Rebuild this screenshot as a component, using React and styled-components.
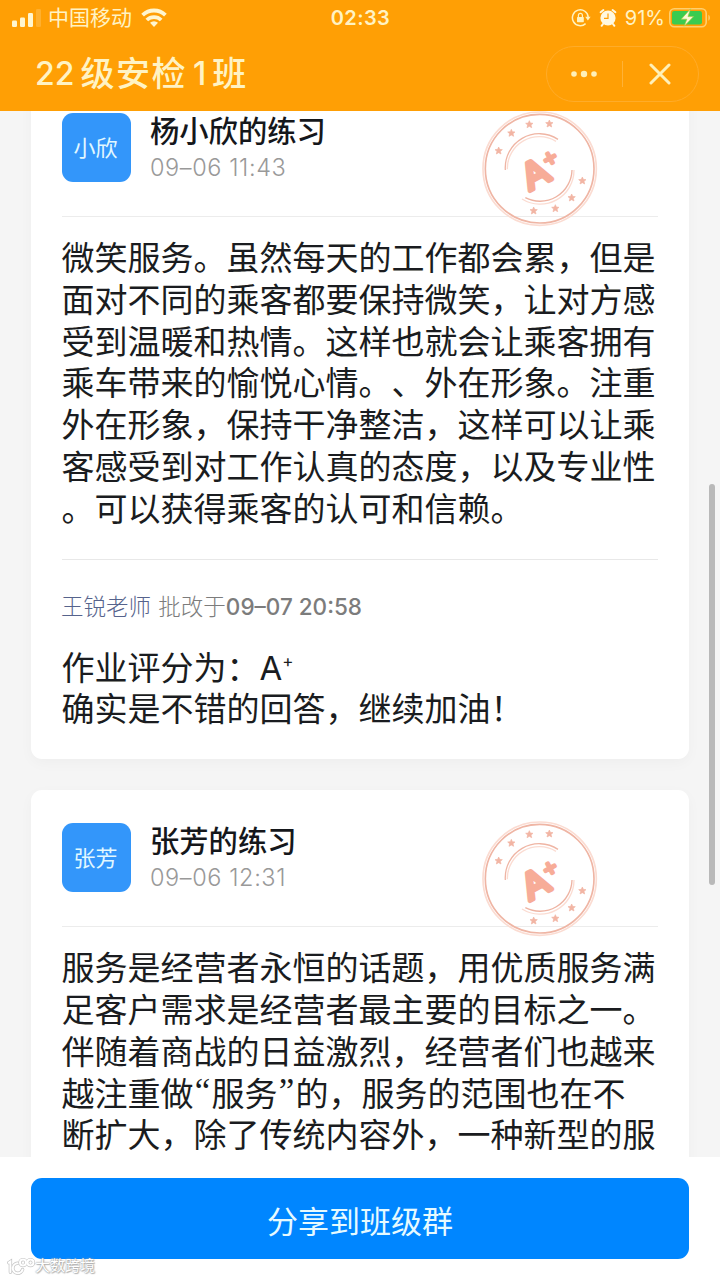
import React from 'react';
import styled, { createGlobalStyle } from 'styled-components';

const records = [
    {
        id: 1,
        avatar: '小欣',
        title: '杨小欣的练习',
        time: '09–06 11:43',
        lines: [
            '微笑服务。虽然每天的工作都会累，但是',
            '面对不同的乘客都要保持微笑，让对方感',
            '受到温暖和热情。这样也就会让乘客拥有',
            '乘车带来的愉悦心情。、外在形象。注重',
            '外在形象，保持干净整洁，这样可以让乘',
            '客感受到对工作认真的态度，以及专业性',
            '。可以获得乘客的认可和信赖。',
        ],
        review: {
            teacher: '王锐老师',
            time: '09–07 20:58',
            comment: '确实是不错的回答，继续加油！',
        },
    },
    {
        id: 2,
        avatar: '张芳',
        title: '张芳的练习',
        time: '09–06 12:31',
        lines: [
            '服务是经营者永恒的话题，用优质服务满',
            '足客户需求是经营者最主要的目标之一。',
            '伴随着商战的日益激烈，经营者们也越来',
            '越注重做“服务”的，服务的范围也在不',
            '断扩大，除了传统内容外，一种新型的服',
        ],
    },
];

const stars = [
    [86, 137], [124, 84], [178, 58], [238, 56],
    [337, 227], [305, 278], [256, 310], [191, 317],
];

// curly quotes get their own narrow cell between the full-width characters
const withQuotes = line => line.split(/([“”])/).map((part, i) => (
    i % 2 ? <Quote key={i}>{part}</Quote> : part
));

function StatusBar()
{
    return (
        <Status>
            <StatusSide>
                <svg width="30" height="20" viewBox="0 0 30 20" fill="#fff6d0">
                    <rect x="0" y="12.5" width="5" height="6.5" rx="1.2"/>
                    <rect x="8" y="9.5" width="5" height="9.5" rx="1.2"/>
                    <rect x="16" y="5" width="5" height="14" rx="1.2"/>
                    <rect x="24" y="1" width="5" height="18" rx="1.2" opacity="0.2"/>
                </svg>
                <Carrier>中国移动</Carrier>
                <svg width="26" height="20" viewBox="0 0 26 20" fill="none" stroke="#fff6d0" strokeWidth="3.8">
                    <path d="M1.6 7.2a16.2 16.2 0 0 1 22.8 0"/>
                    <path d="M5.8 12a10.4 10.4 0 0 1 14.4 0"/>
                    <path d="M13 19l-4-4.2a5.8 5.8 0 0 1 8 0z" fill="#fff6d0" stroke="none"/>
                </svg>
            </StatusSide>
            <Clock>02:33</Clock>
            <StatusSide $right>
                <svg width="20" height="20" viewBox="0 0 20 20" fill="none" stroke="#fff3c0" strokeWidth="1.5">
                    <path d="M17.2 9.2A7.9 7.9 0 1 0 14.6 15.6"/>
                    <path d="M14.2 8.8h5.4l-2.7 3.8z" fill="#fff3c0" stroke="none"/>
                    <rect x="6" y="9" width="6.8" height="5.2" rx="0.6" fill="#fff3c0" stroke="none"/>
                    <path d="M7.4 9V7.4a2 2 0 0 1 4 0V9" strokeWidth="1.2"/>
                </svg>
                <AlarmIcon width="18" height="20" viewBox="0 0 18 20" fill="#fff8e0">
                    <circle cx="9" cy="10" r="7.6"/>
                    <path d="M1.6 4.2L4.4 2M16.4 4.2L13.6 2M4 16l-1.4 1.8M14 16l1.4 1.8" stroke="#fff8e0" strokeWidth="2" strokeLinecap="round"/>
                    <path d="M9 5.4V10.4H5" fill="none" stroke="#ff9f05" strokeWidth="1.2"/>
                </AlarmIcon>
                <Percent>91%</Percent>
                <svg width="44" height="20" viewBox="0 0 44 20">
                    <rect x="0.8" y="0.8" width="36.4" height="18" rx="4.5" fill="none" stroke="#ffcf6e" strokeWidth="1.6"/>
                    <rect x="3" y="3" width="30" height="13.6" rx="2.4" fill="#3bcb50"/>
                    <path d="M39.4 6.8c2 .8 2 5.2 0 6z" fill="#ffcf6e"/>
                    <path d="M21.6 0.8l-9.4 10.4h5.6l-2.6 7 9.4-9.6h-5.6z" fill="#fff8d8" stroke="#9fce3c" strokeWidth="0.7"/>
                </svg>
            </StatusSide>
        </Status>
    );
}

function GradeStamp()
{
    return (
        <Stamp width="140" height="125" viewBox="0 0 420 375">
            <g fill="none">
                <circle cx="209" cy="191" r="170" stroke="#fbdcd2" strokeWidth="5"/>
                <circle cx="209" cy="191" r="163" stroke="#efb5a4" strokeWidth="5"/>
                <path d="M106 195A102 102 0 0 1 264 103" stroke="#efb5a4" strokeWidth="4"/>
                <path d="M112 193A96 96 0 0 1 258 109" stroke="#fbdcd2" strokeWidth="4"/>
                <path d="M312 195A102 102 0 0 1 156 282" stroke="#fbdcd2" strokeWidth="4"/>
                <path d="M306 195A96 96 0 0 1 166 278" stroke="#eeb3a2" strokeWidth="4"/>
            </g>
            {stars.map(([x, y]) => (
                <path
                    key={x}
                    transform={`translate(${x} ${y})`}
                    d="M0-11l3 7 8 1-6 5 2 8-7-4-7 4 2-8-6-5 8-1z"
                    fill="#f2b5a4"
                    stroke="#f2b5a4"
                    strokeWidth="2"
                    strokeLinejoin="round"
                />
            ))}
            <StampText transform="translate(213 240) rotate(-28)" $size={112} $stroke={14}>A</StampText>
            <StampText transform="translate(251 180) rotate(-28)" $size={68} $stroke={10}>+</StampText>
        </Stamp>
    );
}

function Record({ record })
{
    const { avatar, title, time, lines, review } = record;

    return (
        <Card>
            <CardHead>
                <Avatar>{avatar}</Avatar>
                <div>
                    <Name>{title}</Name>
                    <Time>{time}</Time>
                </div>
            </CardHead>
            <Body>
                {lines.map(line => <Line key={line}>{withQuotes(line)}</Line>)}
            </Body>
            {review &&
                <Review>
                    <ReviewMeta>
                        <Teacher>{review.teacher}</Teacher> 批改于<b>{review.time}</b>
                    </ReviewMeta>
                    <Line>作业评分为：A<Plus>+</Plus></Line>
                    <Line>{review.comment}</Line>
                </Review>
            }
            <GradeStamp/>
        </Card>
    );
}

function App()
{
    return (
        <>
            <GlobalStyle/>
            <Screen>
                <Header>
                    <StatusBar/>
                    <NavBar>
                        <Title>22<span>级安检</span>1<span>班</span></Title>
                        <Capsule>
                            <svg width="26" height="8" viewBox="0 0 26 8" fill="#fff0b8">
                                <circle cx="3" cy="4" r="2.8"/>
                                <circle cx="13" cy="4" r="3.2"/>
                                <circle cx="23" cy="4" r="2.8"/>
                            </svg>
                            <CapsuleLine/>
                            <svg width="22" height="22" viewBox="0 0 22 22" stroke="#fff0b8" strokeWidth="3" strokeLinecap="round">
                                <path d="M2 2l18 18M20 2L2 20"/>
                            </svg>
                        </Capsule>
                    </NavBar>
                </Header>
                <List>
                    {records.map(record => <Record key={record.id} record={record}/>)}
                </List>
                <Footer>
                    <ShareButton>分享到班级群</ShareButton>
                </Footer>
                <ScrollThumb/>
                <Watermark>
                    <svg width="28" height="17" viewBox="0 0 28 17" fill="none" strokeLinecap="round">
                        <g stroke="#c4c4c4" strokeWidth="3.4">
                            <path d="M1.8 4.6L3.4 3.6V14.2M10.6 5.2a5 5 0 1 0 5 6.4"/>
                            <circle cx="16" cy="4.6" r="3"/>
                            <circle cx="23.5" cy="4.6" r="3"/>
                        </g>
                        <g stroke="#fff" strokeWidth="2">
                            <path d="M1.8 4.6L3.4 3.6V14.2M10.6 5.2a5 5 0 1 0 5 6.4"/>
                            <circle cx="16" cy="4.6" r="3"/>
                            <circle cx="23.5" cy="4.6" r="3"/>
                        </g>
                    </svg>
                    <span>大数跨境</span>
                </Watermark>
            </Screen>
        </>
    );
}

const GlobalStyle = createGlobalStyle`
    *
    {
        box-sizing: border-box;
    }
    body
    {
        margin: 0;
        font-family: Inter, "Noto Sans CJK SC", sans-serif;
        text-spacing-trim: space-all;
    }
    svg
    {
        display: block;
        flex: none;
    }
`;

const Screen = styled.div`
    position: relative;
    width: 720px;
    height: 1280px;
    display: flex;
    flex-direction: column;
    overflow: hidden;
    background-color: #f5f5f5;
`;

const Header = styled.header`
    flex: none;
    height: 111px;
    background-color: #ff9f05;
    color: #fff3c4;
`;

const Status = styled.div`
    height: 36px;
    padding: 0 9px 0 12px;
    display: grid;
    grid-template-columns: 1fr auto 1fr;
    align-items: center;
`;

const StatusSide = styled.div`
    display: flex;
    align-items: center;
    justify-content: ${props => props.$right ? 'flex-end' : 'flex-start'};
    margin-right: ${props => props.$right ? '-2px' : '0'};
`;

const Carrier = styled.span`
    margin: 0 9px 0 6px;
    font-size: 21px;
    line-height: 36px;
`;

const Clock = styled.span`
    margin-right: 2px;
    font-size: 20px;
    font-weight: 600;
    letter-spacing: 0.4px;
    line-height: 36px;
`;

const AlarmIcon = styled.svg`
    margin: 0 8px 0 8px;
`;

const Percent = styled.span`
    margin-right: 4px;
    font-size: 20px;
    line-height: 36px;
`;

const NavBar = styled.div`
    height: 75px;
    padding: 0 21px 0 35px;
    display: flex;
    align-items: center;
    justify-content: space-between;
`;

const Title = styled.h1`
    margin: 0;
    display: flex;
    gap: 6px;
    font-size: 32px;
    font-weight: 500;
    line-height: 48px;
    span
    {
        font-size: 34px;
        letter-spacing: 1.5px;
    }
`;

const Capsule = styled.div`
    width: 153px;
    height: 56px;
    padding: 0 27px 0 24px;
    display: flex;
    align-items: center;
    justify-content: space-between;
    border: 1px solid #ffac29;
    border-radius: 28px;
`;

const CapsuleLine = styled.div`
    width: 1px;
    height: 26px;
    margin-right: 2px;
    background-color: #ffb237;
`;

const List = styled.main`
    flex: 1;
    min-height: 0;
    padding: 0 31px;
    display: flex;
    flex-direction: column;
    gap: 31px;
    overflow: hidden;
`;

const Card = styled.section`
    position: relative;
    flex: none;
    padding: 0 31px 28px;
    background-color: #fff;
    border-radius: 11px;
    box-shadow: 0 4px 14px rgba(0, 0, 0, 0.03);
    &:first-child
    {
        margin-top: -31px;
    }
`;

const CardHead = styled.div`
    height: 137px;
    padding-top: 33px;
    display: flex;
    gap: 19px;
    border-bottom: 1px solid #ececec;
`;

const Avatar = styled.div`
    width: 69px;
    height: 69px;
    padding: 0 2px 3px 0;
    display: flex;
    align-items: center;
    justify-content: center;
    border-radius: 11px;
    background-color: #3396fa;
    color: #e2f8ff;
    font-size: 22px;
`;

const Name = styled.h2`
    margin: 0;
    color: #15171b;
    font-size: 29.3px;
    font-weight: 500;
    line-height: 37px;
`;

const Time = styled.div`
    margin-top: 3px;
    color: #999;
    font-size: 23.5px;
    font-weight: 300;
    letter-spacing: 0.6px;
    line-height: 30px;
`;

const Body = styled.div`
    padding-top: 21px;
`;

const Line = styled.p`
    margin: 0 0 0 -0.5px;
    color: #1a1c20;
    font-size: 33px;
    line-height: 41.8px;
    white-space: nowrap;
`;

const Quote = styled.span`
    display: inline-block;
    width: 18px;
    font-family: "Liberation Serif", serif;
    font-size: 35px;
    line-height: 1;
    text-align: center;
    vertical-align: 3px;
    height: 20px;
`;

const Plus = styled.sup`
    font-size: 17px;
    line-height: 0;
    vertical-align: 13px;
`;

const Review = styled.div`
    margin-top: 28px;
    border-top: 1px solid #e8e8e8;
`;

const ReviewMeta = styled.div`
    margin: 29px 0 24px -1px;
    color: #7c7c7c;
    font-size: 22.5px;
    font-weight: 300;
    line-height: 35px;
    b
    {
        font-weight: 500;
    }
`;

const Teacher = styled.span`
    margin-right: 1px;
    color: #56638c;
`;

const Stamp = styled.svg`
    position: absolute;
    top: 25px;
    left: 439px;
`;

const StampText = styled.text`
    fill: #f7ac98;
    stroke: #f7ac98;
    stroke-width: ${props => props.$stroke}px;
    stroke-linejoin: round;
    font-family: "Liberation Sans", sans-serif;
    font-size: ${props => props.$size}px;
    text-anchor: middle;
`;

const Footer = styled.footer`
    flex: none;
    height: 123px;
    padding: 21px 31px;
    background-color: #fff;
`;

const ShareButton = styled.button`
    width: 100%;
    height: 81px;
    padding: 1px 0 0;
    border: none;
    border-radius: 11px;
    background-color: #0086ff;
    color: #e6faff;
    font-family: inherit;
    font-size: 31px;
`;

const ScrollThumb = styled.div`
    position: absolute;
    top: 484px;
    right: 5px;
    width: 6px;
    height: 401px;
    border-radius: 3px;
    background-color: #b9b9b9;
`;

const Watermark = styled.div`
    position: absolute;
    left: 7px;
    bottom: 5px;
    display: flex;
    align-items: center;
    color: #fff;
    font-size: 15px;
    line-height: 18px;
    text-shadow: 0 0 1px #999, 0 0 2px #aaa, 1px 1px 1px #bbb;
`;

export default App;
